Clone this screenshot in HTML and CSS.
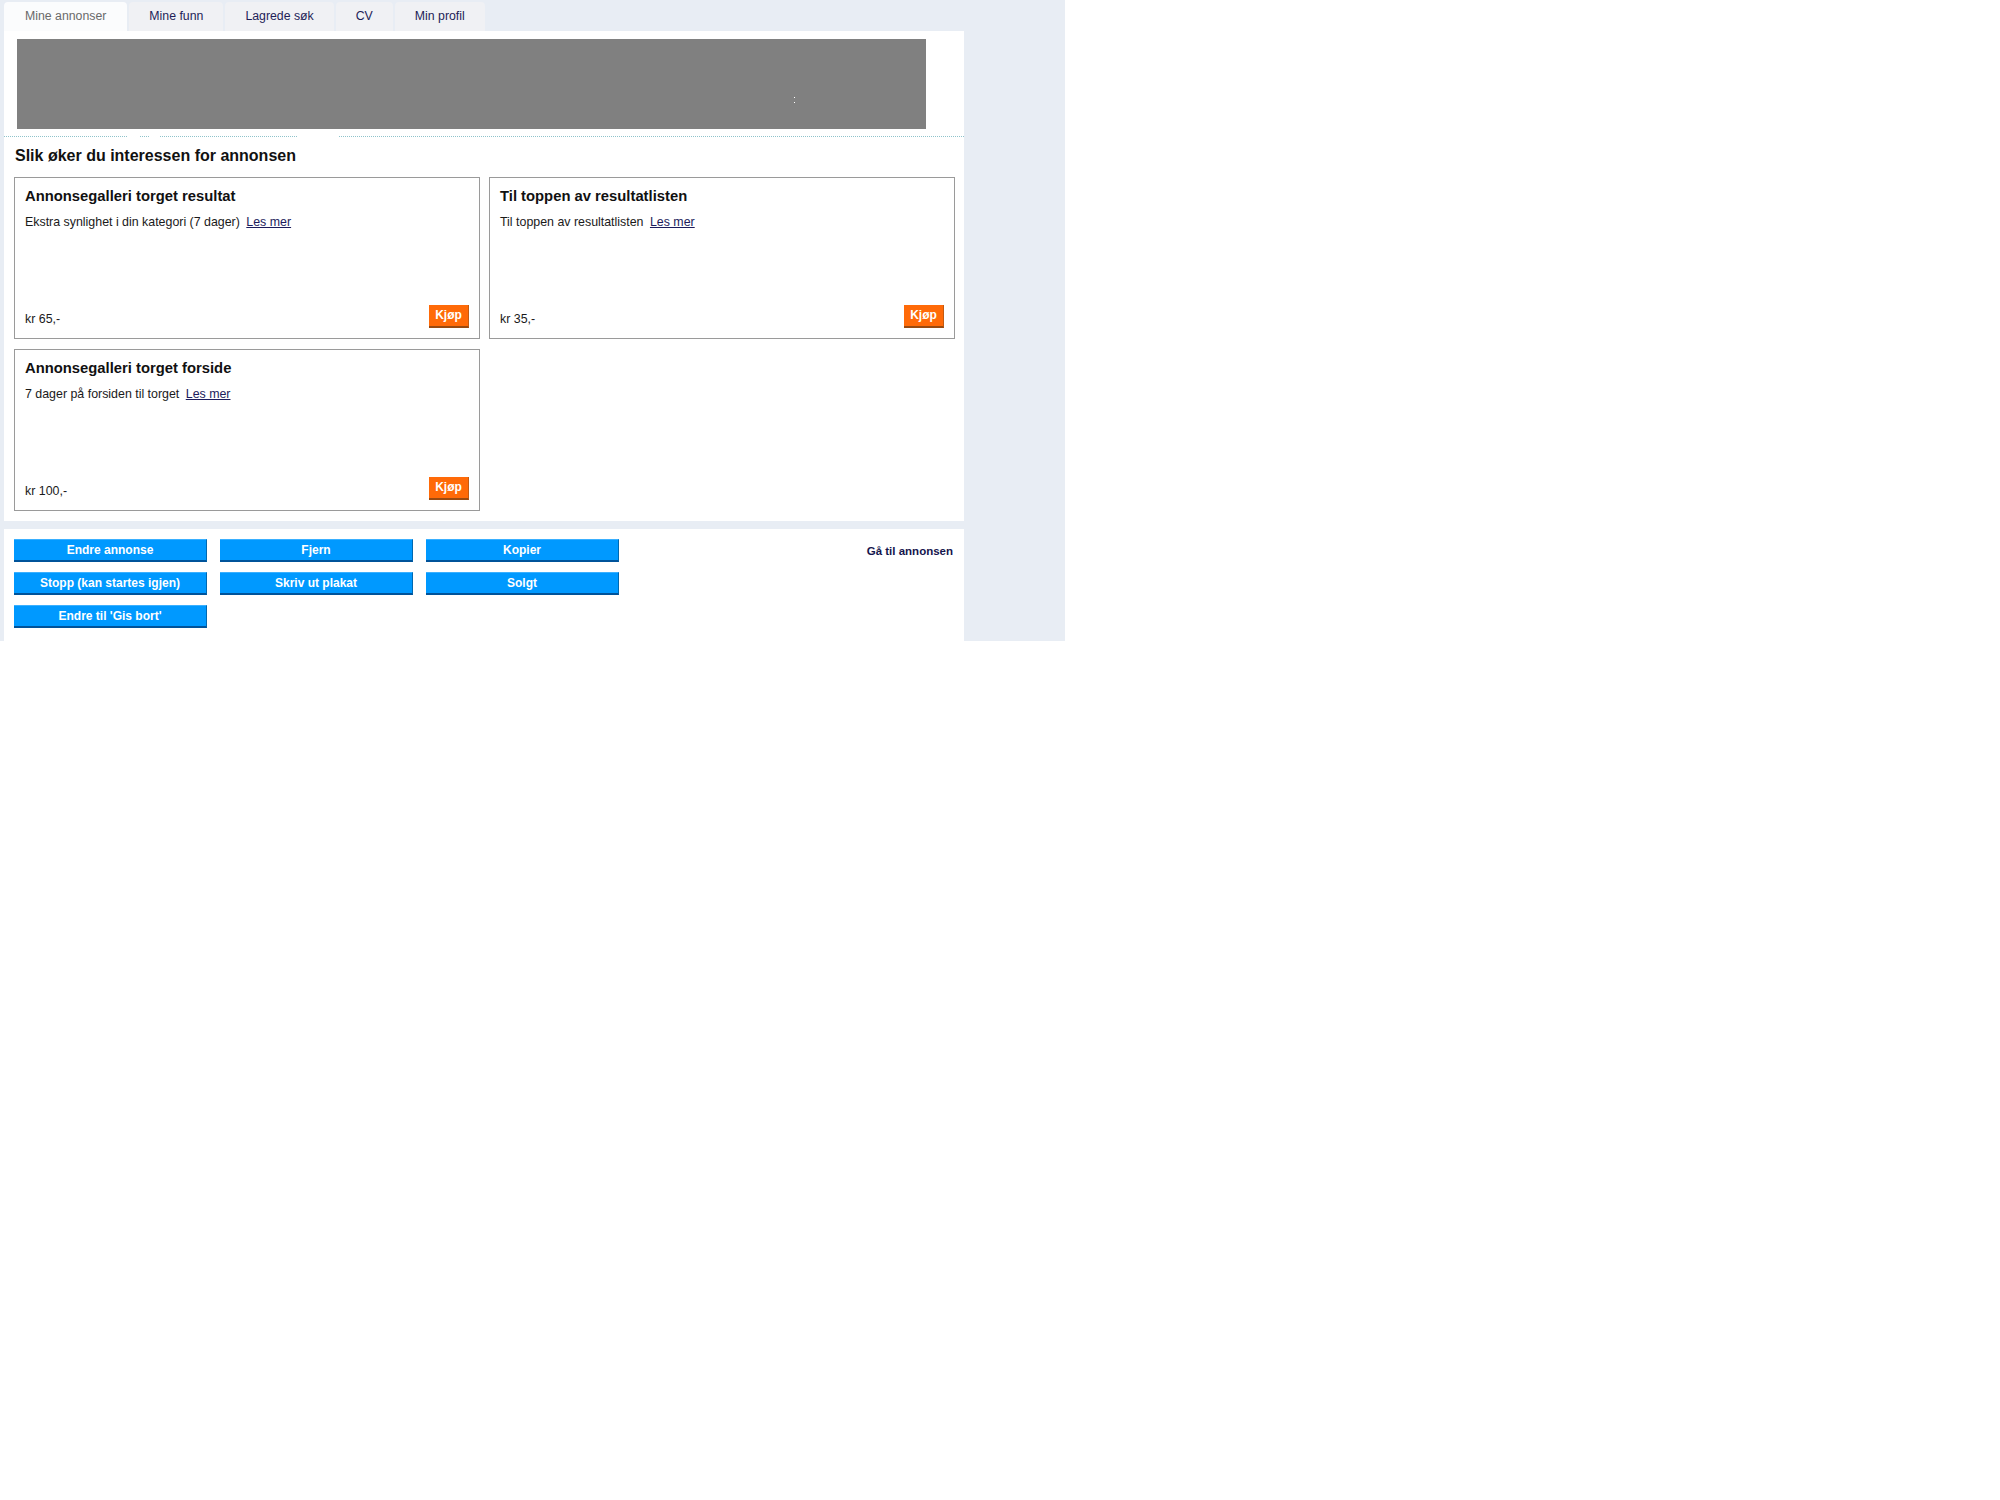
FILE: index.html
```html
<!DOCTYPE html>
<html lang="no">
<head>
<meta charset="utf-8">
<title>Mine annonser</title>
<link rel="stylesheet" href="styles.css">
</head>
<body>
<div class="page">
  <nav class="tabs">
    <a class="tab active">Mine annonser</a>
    <a class="tab">Mine funn</a>
    <a class="tab">Lagrede søk</a>
    <a class="tab">CV</a>
    <a class="tab">Min profil</a>
  </nav>

  <section class="panel main">
    <div class="banner"><span class="banner-mark"></span></div>
    <div class="divider">
      <span class="seg s1"></span>
      <span class="seg s2"></span>
      <span class="seg s3"></span>
      <span class="seg s4"></span>
    </div>
    <h2 class="heading">Slik øker du interessen for annonsen</h2>
    <div class="cards">
      <div class="card">
        <div class="card-top">
          <h3 class="card-title">Annonsegalleri torget resultat</h3>
          <p class="card-desc">Ekstra synlighet i din kategori (7 dager) <a class="more">Les mer</a></p>
        </div>
        <div class="card-foot">
          <span class="price">kr 65,-</span>
          <button class="buy">Kjøp</button>
        </div>
      </div>
      <div class="card">
        <div class="card-top">
          <h3 class="card-title">Til toppen av resultatlisten</h3>
          <p class="card-desc">Til toppen av resultatlisten <a class="more">Les mer</a></p>
        </div>
        <div class="card-foot">
          <span class="price">kr 35,-</span>
          <button class="buy">Kjøp</button>
        </div>
      </div>
      <div class="card">
        <div class="card-top">
          <h3 class="card-title">Annonsegalleri torget forside</h3>
          <p class="card-desc">7 dager på forsiden til torget <a class="more">Les mer</a></p>
        </div>
        <div class="card-foot">
          <span class="price">kr 100,-</span>
          <button class="buy">Kjøp</button>
        </div>
      </div>
    </div>
  </section>

  <section class="panel actions">
    <div class="btn-grid">
      <button class="act">Endre annonse</button>
      <button class="act">Fjern</button>
      <button class="act">Kopier</button>
      <button class="act">Stopp (kan startes igjen)</button>
      <button class="act">Skriv ut plakat</button>
      <button class="act">Solgt</button>
      <button class="act">Endre til 'Gis bort'</button>
    </div>
    <a class="goto">Gå til annonsen</a>
  </section>
</div>
</body>
</html>
```

FILE: styles.css
```css
html, body {
  margin: 0;
  padding: 0;
  background: #ffffff;
}

body {
  font-family: "Liberation Sans", Arial, sans-serif;
  color: #1a1a1a;
}

.page {
  width: 1065px;
  height: 641px;
  box-sizing: border-box;
  padding: 2px 0 0 4px;
  background: #e8edf4;
}

/* Tabs */
.tabs {
  display: flex;
  gap: 2px;
  height: 29px;
}

.tab {
  display: block;
  padding: 0 20px;
  line-height: 29px;
  font-size: 12.3px;
  color: #1e1e58;
  background: #f0f1f4;
  border-radius: 4px 4px 0 0;
  text-decoration: none;
}

.tab.active {
  padding: 0 21px;
  background: #fbfcfd;
  color: #6a6a6a;
}

/* Panels */
.panel {
  width: 960px;
  box-sizing: border-box;
  background: #ffffff;
}

.main {
  height: 490px;
  padding: 8px 9px 10px 10px;
}

.banner {
  position: relative;
  width: 909px;
  height: 90px;
  margin-left: 3px;
  background: #808080;
}

.banner-mark {
  position: absolute;
  left: 777px;
  top: 58px;
  width: 1px;
  height: 1px;
  background: #ffffff;
  box-shadow: 0 5px 0 #ffffff;
}

.divider {
  display: flex;
  margin: 7px -9px 0 -10px;
  height: 1px;
}

.seg {
  display: block;
  height: 0;
  border-top: 1px dotted #8fc3cb;
}

.s1 { width: 123px; }
.s2 { width: 9px; margin-left: 13px; }
.s3 { width: 137px; margin-left: 11px; }
.s4 { flex: 1; margin-left: 42px; }

.heading {
  margin: 10px 0 12px 1px;
  font-size: 16px;
  line-height: 18px;
  font-weight: bold;
  color: #111111;
}

/* Cards */
.cards {
  display: grid;
  grid-template-columns: 466px 466px;
  grid-auto-rows: 162px;
  column-gap: 9px;
  row-gap: 10px;
}

.card {
  display: flex;
  flex-direction: column;
  justify-content: space-between;
  box-sizing: border-box;
  padding: 10px 10px 10px 10px;
  border: 1px solid #9a9a9a;
}

.card-title {
  margin: 0;
  font-size: 14.8px;
  line-height: 17px;
  font-weight: bold;
  color: #111111;
}

.card-desc {
  margin: 10px 0 0 0;
  font-size: 12.4px;
  line-height: 15px;
  color: #1a1a1a;
}

.more {
  margin-left: 3px;
  color: #1c1c5c;
  text-decoration: underline;
}

.card-foot {
  display: flex;
  justify-content: space-between;
  align-items: flex-end;
}

.price {
  font-size: 12.4px;
  line-height: 15px;
  margin-bottom: 1px;
  color: #1a1a1a;
}

.buy {
  width: 40px;
  height: 23px;
  padding: 0;
  margin: 0;
  border: none;
  border-bottom: 2px solid #9a4a10;
  border-right: 1px solid #c45a10;
  background: #ff6a08;
  color: #ffffff;
  font-family: "Liberation Sans", Arial, sans-serif;
  font-size: 12px;
  font-weight: bold;
  line-height: 21px;
}

/* Actions */
.actions {
  margin-top: 8px;
  height: 112px;
  padding: 10px 11px 13px 10px;
  display: flex;
  justify-content: space-between;
  align-items: flex-start;
}

.btn-grid {
  display: grid;
  grid-template-columns: repeat(3, 193px);
  grid-auto-rows: 23px;
  column-gap: 13px;
  row-gap: 10px;
}

.act {
  height: 23px;
  padding: 0;
  margin: 0;
  border: none;
  border-top: 1px solid #3ab0ff;
  border-bottom: 2px solid #00539a;
  border-right: 1px solid #0068b0;
  background: #0099ff;
  color: #ffffff;
  font-family: "Liberation Sans", Arial, sans-serif;
  font-size: 12px;
  font-weight: bold;
  line-height: 19px;
  text-align: center;
}

.goto {
  margin-top: 5px;
  font-size: 11.5px;
  line-height: 14px;
  font-weight: bold;
  color: #15154d;
  text-decoration: none;
}
```
